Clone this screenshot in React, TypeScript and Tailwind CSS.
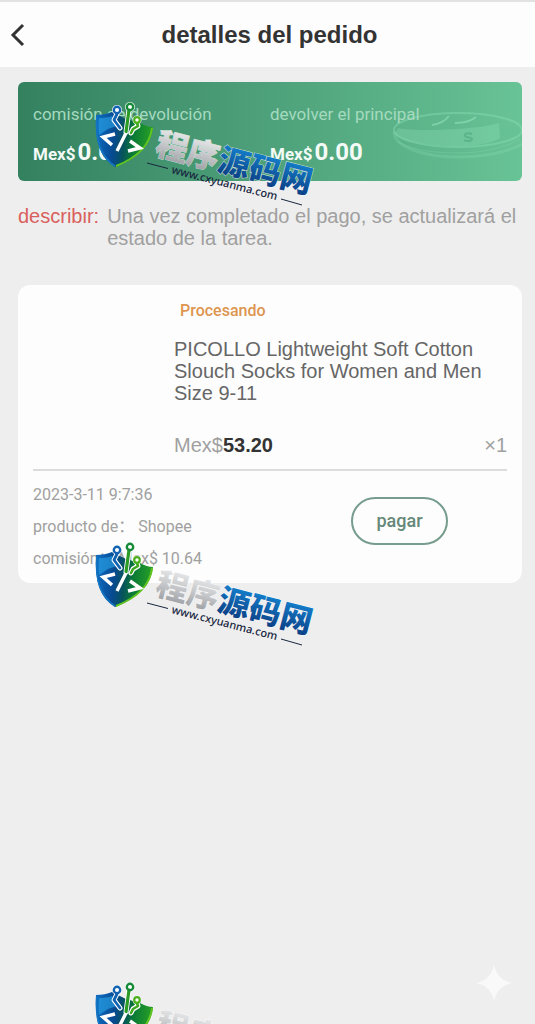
const order = {
  status: "Procesando",
  title: "PICOLLO Lightweight Soft Cotton Slouch Socks for Women and Men Size 9-11",
  price: "53.20",
  qty: 1,
  date: "2023-3-11 9:7:36",
  shop: "Shopee",
  commission: "10.64",
};

const refunds = [
  { label: "comisión de devolución", amount: "0.00" },
  { label: "devolver el principal", amount: "0.00" },
];

function Coins() {
  return (
    <svg viewBox="0 0 132 56" className="absolute top-6 right-0 w-[132px] h-14" fill="none" aria-hidden="true">
      <ellipse cx="68" cy="24" rx="64" ry="17" stroke="#8fe0b8" strokeOpacity=".4" strokeWidth="2" />
      <path d="M4 26c0 14 28 25 64 25 26 0 50-5 64-13" stroke="#8fe0b8" strokeOpacity=".25" strokeWidth="3" />
      <path d="M8 22c16 4 80 2 101-5l1 15c-8 6-30 9-52 8C30 38 8 34 5 27z" fill="#96e6bf" fillOpacity=".28" />
      <path d="M42 19c8-1 13-4 17-9M65 17c8 0 15-1 21-6" stroke="#9be8c3" strokeOpacity=".5" strokeWidth="2" />
      <path d="M82 28c-4-2-8 0-7 2s7 1 7 3-5 3-8 1" stroke="#4da67d" strokeOpacity=".6" strokeWidth="2" />
      <path d="M8 36c14 8 36 11 60 11s46-5 62-14" stroke="#8fe0b8" strokeOpacity=".25" />
    </svg>
  );
}

function Watermark({ id }: { id: string }) {
  return (
    <svg viewBox="0 0 232 108" className="block w-[232px] h-[108px] shrink-0">
      <defs>
        <linearGradient id={`${id}-blue`} x1="0" y1="0" x2="0" y2="1">
          <stop offset=".15" stopColor="#1583d0" />
          <stop offset="1" stopColor="#0a3478" />
        </linearGradient>
        <linearGradient id={`${id}-shield`} gradientUnits="userSpaceOnUse" x1="6" y1="34" x2="58" y2="38">
          <stop offset="0" stopColor="#0d68bb" />
          <stop offset=".3" stopColor="#074a92" />
          <stop offset=".5" stopColor="#07535c" />
          <stop offset=".68" stopColor="#0a7a36" />
          <stop offset="1" stopColor="#249c27" />
        </linearGradient>
        <linearGradient id={`${id}-silver`} x1="0" y1="0" x2="0" y2="1">
          <stop offset=".1" stopColor="#f0f0f0" />
          <stop offset=".55" stopColor="#c4c6c9" />
          <stop offset="1" stopColor="#92959a" />
        </linearGradient>
      </defs>

      <path d="M4 14Q13 14 20 11L34 18L48 22Q55 26 61 26Q59 52 23 66Q1 53 4 14Z" fill={`url(#${id}-shield)`} />
      <path d="M7 17Q15 17 20 15L28 24L16 28L7 34Q6 24 7 17Z" fill="#2ba5e8" fillOpacity=".6" />
      <path d="M60 27Q57 52 24 65" stroke="#62c51f" strokeWidth="2" fill="none" />
      <path d="M5 15Q2 52 23 65" stroke="#1576c4" strokeWidth="1.5" fill="none" />

      <g fill="none" strokeLinecap="round" strokeLinejoin="round">
        <path d="M25 13L22 19L28 27M37 9L34 31M45 22L46 25L41 28L39 32" stroke="#fff" strokeWidth="5" />
        <circle cx="25" cy="9" r="4" fill="#fff" stroke="#fff" strokeWidth="2" />
        <circle cx="38" cy="6" r="4" fill="#fff" stroke="#fff" strokeWidth="2" />
        <circle cx="45" cy="19" r="3.500" fill="#fff" stroke="#fff" strokeWidth="2" />
        <path d="M25 13L22 19L28 27" stroke="#1263b2" strokeWidth="2.800" />
        <path d="M37 9L34 31" stroke="#2c9b26" strokeWidth="3.200" />
        <path d="M45 22L46 25L41 28L39 32" stroke="#3fa81f" strokeWidth="2.600" />
        <circle cx="25" cy="9" r="3.200" stroke="#1263b2" strokeWidth="2.400" />
        <circle cx="38" cy="6" r="3.200" stroke="#168a38" strokeWidth="2.400" />
        <circle cx="45" cy="19" r="2.800" stroke="#4caf1d" strokeWidth="2.200" />
      </g>

      <path d="M23 33L11 36L20 44M34 32L25 50M38 40L48 47L36 50" stroke="#fff" strokeWidth="3.400" fill="none" />

      <g transform="translate(62 53) rotate(14.5)">
        <text
          fontSize="32"
          fontWeight="900"
          className="font-['Noto_Sans_CJK_SC',sans-serif]"
          stroke="#ffffff"
          strokeOpacity=".7"
          strokeWidth="1"
          paintOrder="stroke"
        >
          <tspan fill={`url(#${id}-silver)`}>程序</tspan>
          <tspan fill={`url(#${id}-blue)`}>源码网</tspan>
        </text>
      </g>
      <g transform="translate(79 72) rotate(14.5)">
        <text fontSize="11" fontWeight="500" fill="#18263f" className="font-['Noto_Sans',sans-serif]">www.cxyuanma.com</text>
      </g>
      <path d="M55 62L76 67.500M189 98L210 104" stroke="#18263f" strokeWidth="1" />
    </svg>
  );
}

export default function OrderDetailsPage() {
  return (
    <div className="relative min-h-screen overflow-hidden bg-[#eeeeee] font-['Liberation_Sans',Arial,sans-serif]">
      <header className="relative flex h-[67px] items-center justify-center border-t-2 border-[#e2e2e2] bg-[#fdfdfd]">
        <button aria-label="Volver" className="absolute left-2 p-0.5 text-[#333]">
          <svg viewBox="0 0 16 24" className="h-6 w-4" fill="none" stroke="currentColor" strokeWidth="3">
            <path d="M13 2L3 12L13 22" />
          </svg>
        </button>
        <h1 className="pl-1 text-2xl font-bold text-[#333]">detalles del pedido</h1>
      </header>

      <main className="pt-[15px] pr-[13px] pl-[18px]">
        <section className="relative flex h-[99px] rounded-md bg-linear-to-r from-[#348160] to-[#68c396] px-[15px] pt-5 font-[Roboto,sans-serif]">
          <Coins />
          {refunds.map(r => (
            <div key={r.label} className="relative w-1/2">
              <div className="text-[17px] leading-6 text-[#a5dabf]">{r.label}</div>
              <div className="mt-3 flex items-baseline gap-0.5 leading-7 font-bold text-[#f4fbf7]">
                <span className="text-[17px]">Mex$</span>
                <span className="text-2xl leading-7">{r.amount}</span>
              </div>
            </div>
          ))}
        </section>

        <div className="mt-6 flex text-xl leading-[22px] text-[#a0a0a0]">
          <span className="mr-2 text-[#d9605c]">describir:</span>
          <p>Una vez completado el pago, se actualizará el estado de la tarea.</p>
        </div>

        <section className="mt-9 rounded-xl bg-[#fdfdfd] px-[15px] pb-2">
          <div className="border-b-2 border-[#dcdcdc] pt-4 pb-3 pl-[141px]">
            <div className="pl-1.5 font-[Roboto,sans-serif] text-base leading-5 font-medium text-[#dd954f]">{order.status}</div>
            <h2 className="mt-[17px] text-xl leading-[22px] text-[#666]">{order.title}</h2>
            <div className="mt-[29px] flex justify-between text-xl leading-6 text-[#a0a0a0]">
              <span>Mex$<b className="text-[#333]">{order.price}</b></span>
              <span>×{order.qty}</span>
            </div>
          </div>
          <div className="flex items-start justify-between pt-2 font-[Roboto,'Noto_Sans_CJK_SC',sans-serif] text-base leading-8 text-[#a0a0a0]">
            <div>
              <div>{order.date}</div>
              <div>producto de： {order.shop}</div>
              <div>comisión： Mex$ {order.commission}</div>
            </div>
            <button className="mt-[18px] mr-[59px] h-12 w-[97px] rounded-full border-2 border-[#769c8d] text-lg font-medium text-[#668879]">pagar</button>
          </div>
        </section>
      </main>

      <svg viewBox="0 0 36 36" className="absolute right-[23px] bottom-[23px] size-9" aria-hidden="true">
        <path d="M18 0Q21 15 36 18Q21 21 18 36Q15 21 0 18Q15 15 18 0Z" fill="#f9f9f9" />
      </svg>

      <div className="pointer-events-none absolute top-[101px] left-[92px] flex flex-col gap-[332px]">
        <Watermark id="wm1" />
        <Watermark id="wm2" />
        <Watermark id="wm3" />
      </div>
    </div>
  );
}
